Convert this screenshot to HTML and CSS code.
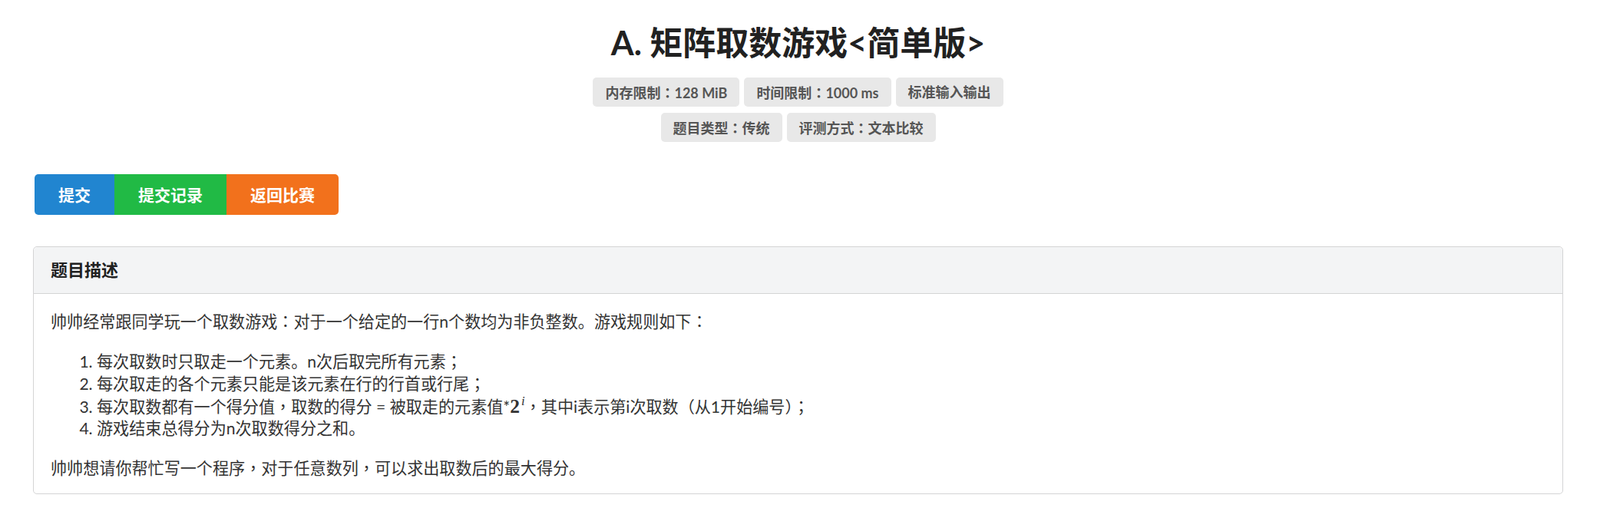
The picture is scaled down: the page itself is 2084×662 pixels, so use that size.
FILE: index.html
```html
<!DOCTYPE html>
<html lang="zh-CN">
<head>
    <meta charset="UTF-8">
    <meta name="viewport" content="width=device-width, initial-scale=1.0">
    <title>A. 矩阵取数游戏&lt;简单版&gt;</title>
    <link rel="stylesheet" href="styles.css">
</head>
<body>
    <div class="container">
        <h1 class="title">A. 矩阵取数游戏&lt;简单版&gt;</h1>

        <div class="labels">
            <div class="label-row">
                <span class="label">内存限制<span class="pn" lang="zh-TW">：</span>128 MiB</span>
                <span class="label">时间限制<span class="pn" lang="zh-TW">：</span>1000 ms</span>
                <span class="label">标准输入输出</span>
            </div>
            <div class="label-row">
                <span class="label">题目类型<span class="pn" lang="zh-TW">：</span>传统</span>
                <span class="label">评测方式<span class="pn" lang="zh-TW">：</span>文本比较</span>
            </div>
        </div>

        <div class="buttons">
            <a class="btn blue" href="#">提交</a>
            <a class="btn green" href="#">提交记录</a>
            <a class="btn orange" href="#">返回比赛</a>
        </div>

        <div class="segment">
            <div class="segment-header">题目描述</div>
            <div class="segment-body">
                <p>帅帅经常跟同学玩一个取数游戏<span class="pn" lang="zh-TW">：</span>对于一个给定的一行n个数均为非负整数。游戏规则如下<span class="pn" lang="zh-TW">：</span></p>
                <ol>
                    <li>每次取数时只取走一个元素。n次后取完所有元素<span class="pn" lang="zh-TW">；</span></li>
                    <li>每次取走的各个元素只能是该元素在行的行首或行尾<span class="pn" lang="zh-TW">；</span></li>
                    <li>每次取数都有一个得分值<span class="pn" lang="zh-TW">，</span>取数的得分 = 被取走的元素值*<span class="math">2<sup>i</sup></span><span class="pn" lang="zh-TW">，</span>其中i表示第i次取数（从1开始编号）<span class="pn" lang="zh-TW">；</span></li>
                    <li>游戏结束总得分为n次取数得分之和。</li>
                </ol>
                <p>帅帅想请你帮忙写一个程序<span class="pn" lang="zh-TW">，</span>对于任意数列<span class="pn" lang="zh-TW">，</span>可以求出取数后的最大得分。</p>
            </div>
        </div>
    </div>
</body>
</html>
```

FILE: styles.css
```css
body {
    margin: 0;
    padding: 0;
    background-color: #fff;
    font-family: Lato, "Noto Sans CJK SC", sans-serif;
    color: #333;
}

.container {
    margin: 0 48px 0 43px;
    padding-top: 29px;
}

.title {
    margin: 0;
    text-align: center;
    font-size: 43px;
    line-height: 54px;
    font-weight: bold;
    color: #212121;
}

.labels {
    display: flex;
    flex-direction: column;
    align-items: center;
    gap: 8px;
    margin-top: 18px;
}
.label-row {
    display: flex;
    gap: 6px;
}
.label {
    height: 38px;
    line-height: 38px;
    padding: 0 16px;
    background-color: #e8e8e8;
    color: #555;
    font-size: 18px;
    font-weight: bold;
    border-radius: 5px;
}

/* centered full-width punctuation */
.pn {
    font-family: "Noto Sans CJK TC", sans-serif;
}

.buttons {
    display: inline-flex;
    margin-top: 42px;
    margin-left: 2px;
    border-radius: 5px;
    overflow: hidden;
}
.btn {
    padding: 16px 31px;
    line-height: 21px;
    font-size: 21px;
    font-weight: bold;
    color: #fff;
    text-decoration: none;
}
.blue {
    background-color: #2185d0;
}
.green {
    background-color: #21ba45;
}
.orange {
    background-color: #f2711c;
}

.segment {
    margin-top: 41px;
    border: 1px solid #d4d4d5;
    border-radius: 5px;
}
.segment-header {
    padding: 15px 22px;
    line-height: 30px;
    font-size: 22px;
    font-weight: bold;
    color: #212121;
    background-color: #f3f4f5;
    border-bottom: 1px solid #d4d4d5;
    border-radius: 5px 5px 0 0;
}
.segment-body {
    padding: 21px 22px 19px;
    font-size: 21.1px;
    line-height: 28.5px;
}
.segment-body p {
    margin: 0 0 22px;
}
.segment-body p:last-child {
    margin-bottom: 0;
}
.segment-body ol {
    margin: 0 0 22px;
    padding-left: 60px;
}
.math {
    font-family: "Liberation Serif", serif;
    font-size: 1.21em;
    font-weight: bold;
    line-height: 1;
}
.math sup {
    font-style: italic;
    font-weight: normal;
    font-size: 0.65em;
    margin-left: 2px;
}
```
